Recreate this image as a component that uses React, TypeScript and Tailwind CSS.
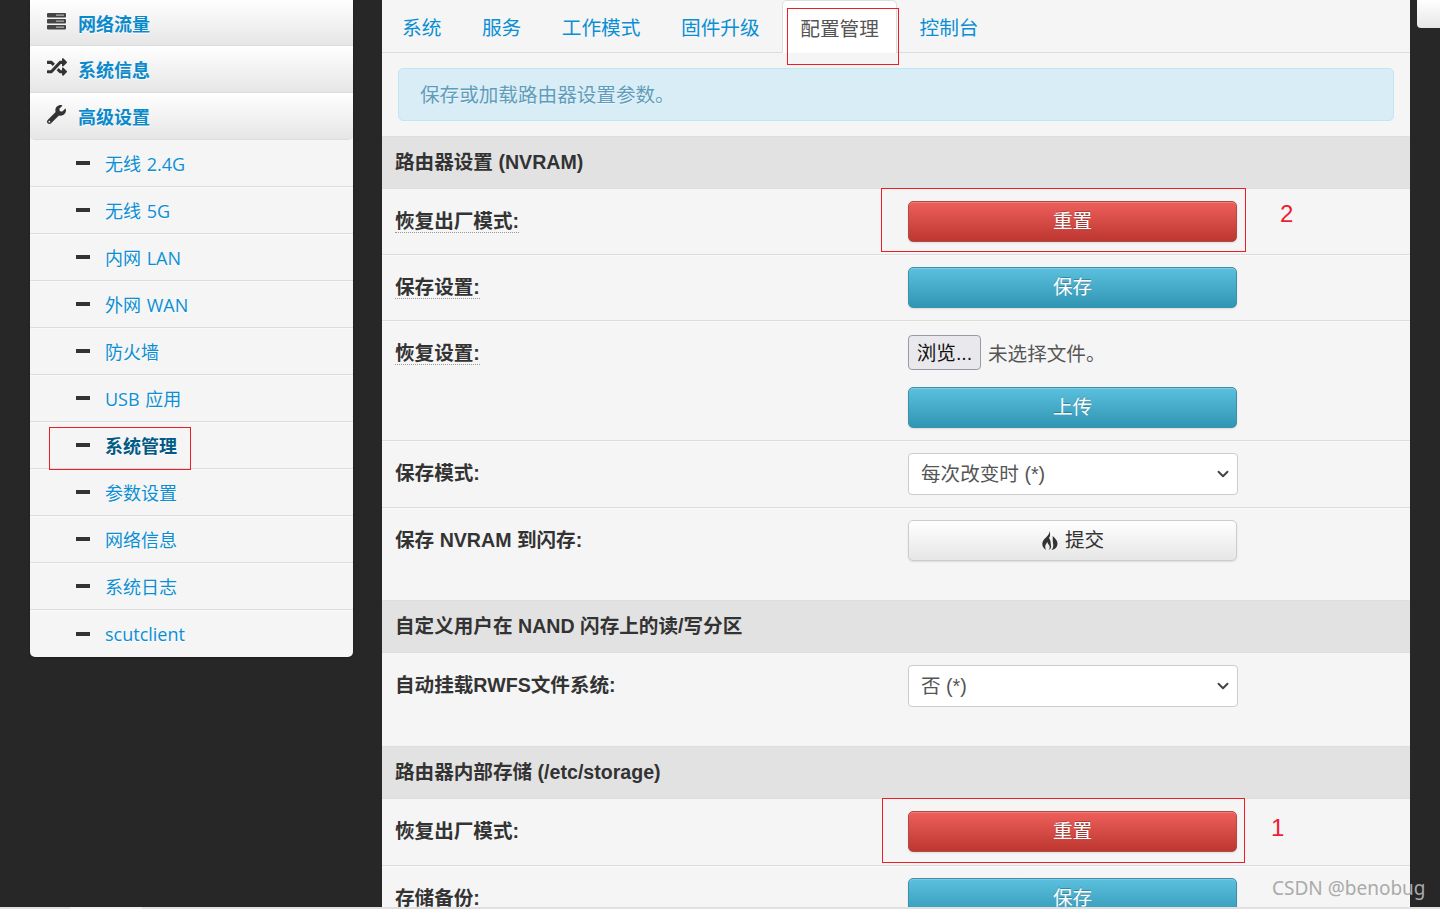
import React from 'react';
import { FaRandom, FaWrench } from 'react-icons/fa';
import { ChevronDown } from 'lucide-react';

const font = "font-['Liberation_Sans','Noto_Sans_CJK_SC',sans-serif]";
const menuFont = "font-['Open_Sans','Noto_Sans_CJK_SC',sans-serif]";

const subItems = ['无线 2.4G', '无线 5G', '内网 LAN', '外网 WAN', '防火墙', 'USB 应用', '系统管理', '参数设置', '网络信息', '系统日志', 'scutclient'];
const tabs = ['系统', '服务', '工作模式', '固件升级', '配置管理', '控制台'];

const StackIcon = () => (
  <svg width="19" height="17" viewBox="0 0 19 17" className="text-[#444]">
    <rect x="0" y="0" width="19" height="4.5" rx="1" fill="currentColor" />
    <rect x="0" y="6" width="19" height="4.5" rx="1" fill="currentColor" />
    <rect x="0" y="12" width="19" height="4.5" rx="1" fill="currentColor" />
    <rect x="9" y="1.6" width="8" height="1" fill="#ccc" />
    <rect x="9" y="7.6" width="8" height="1" fill="#ccc" />
    <rect x="9" y="13.6" width="8" height="1" fill="#ccc" />
  </svg>
);

const FlameIcon = () => (
  <svg width="17" height="19" viewBox="0 0 17 19" className="text-[#333]">
    <path
      fill="currentColor"
      d="M8 0C9 3.5 5.5 5.5 3 8.5C.5 11.5.5 16 5 19C3.5 16 4 13.5 6.5 11C6.5 13 8 13.5 8.5 15C9 16.5 8.5 18 7.5 19C9.5 18.5 10.5 16.5 10 14.5C9.5 12 10 9 8 7C9.5 5 9.5 2.5 8 0Z"
    />
    <path
      fill="currentColor"
      d="M11.5 5C12 7.5 11.5 9.5 12 12C12.5 14.5 12.5 17 10.5 19C14 18.5 16.5 16 16.5 12.5C16.5 9.5 14 7 11.5 5Z"
    />
  </svg>
);

const MenuHead: React.FC<{ icon: React.ReactNode; label: string; height: string; iconClass: string; last?: boolean }> = ({ icon, label, height, iconClass, last }) => (
  <div className={`flex items-center bg-gradient-to-b from-white to-[#e6e6e6] border-b border-[#ddd] ${height} ${last ? 'rounded-b-[5px]' : ''}`}>
    <span className={`flex w-[48px] justify-center pl-[5px] ${iconClass}`}>{icon}</span>
    <span className="pt-[3px] text-[18px] font-bold text-[#0b8acb] [text-shadow:0_1px_0_#fff]">{label}</span>
  </div>
);

const SubItem: React.FC<{ label: string; active: boolean; last: boolean }> = ({ label, active, last }) => (
  <div className={`relative flex h-[47px] items-center pl-[46px] pt-[2px] ${last ? '' : 'border-b border-[#dcdcdc] shadow-[0_1px_0_#fafafa]'}`}>
    <span className="mb-[2px] h-[4px] w-[14px] bg-[#333]" />
    <span className={`ml-[15px] text-[18px] [word-spacing:1px] [text-shadow:0_1px_0_#fff] ${active ? 'font-bold text-[#005a85]' : 'text-[#0b8fd4]'}`}>{label}</span>
    {active && <div className="absolute left-[19px] top-[5px] h-[43px] w-[142px] border border-[#ee1c25]" />}
  </div>
);

const ActionButton: React.FC<{ label: string; color: 'red' | 'blue' }> = ({ label, color }) => (
  <button
    className={`h-[41px] w-[329px] rounded-[5px] border pt-[1px] text-[19.6px] text-white shadow-[inset_0_1px_0_rgba(255,255,255,0.2),0_1px_2px_rgba(0,0,0,0.1)] [text-shadow:0_-1px_0_rgba(0,0,0,0.25)] ${
      color === 'red'
        ? 'border-[#b04a45] bg-gradient-to-b from-[#ee5f5b] to-[#bd362f]'
        : 'border-[#3f8fab] bg-gradient-to-b from-[#5bc0de] to-[#2f96b4]'
    }`}
  >
    {label}
  </button>
);

const SelectBox: React.FC<{ value: string }> = ({ value }) => (
  <div className="flex h-[42px] w-[330px] items-center justify-between rounded-[4px] border border-[#ccc] bg-white pl-[12px] pr-[5px] text-[19.6px] text-[#555]">
    <span className="pt-[1px]">{value}</span>
    <ChevronDown size={18} strokeWidth={2.6} className="text-[#444]" />
  </div>
);

const SectionHead: React.FC<{ title: string }> = ({ title }) => (
  <div className="flex h-[53px] items-center border-y border-[#dedede] bg-[#e2e2e2] pl-[13px] pt-[1px] text-[19.6px] font-bold text-[#333]">{title}</div>
);

const Row: React.FC<{ label: string; height: string; dotted?: boolean; border?: boolean; children: React.ReactNode }> = ({ label, height, dotted, border = true, children }) => (
  <div className={`flex ${height} ${border ? 'border-b border-[#dcdcdc] shadow-[0_1px_0_#fafafa]' : ''}`}>
    <div className="w-[526px] shrink-0 pl-[13px] pt-[19px] text-[19.6px] font-bold leading-[27px] text-[#333]">
      <span className={dotted ? 'border-b border-dotted border-[#999]' : ''}>{label}</span>
    </div>
    <div className="flex flex-col items-start gap-[17px] pt-[12px]">{children}</div>
  </div>
);

export default function App() {
  return (
    <div className={`relative h-[909px] overflow-hidden bg-[#272727] ${font}`}>
      <div className="flex h-[907px] items-start overflow-hidden pl-[30px]">
        {/* Sidebar */}
        <aside className={`w-[323px] shrink-0 overflow-hidden rounded-b-[5px] bg-[#f5f5f5] shadow-[0_1px_2px_rgba(0,0,0,0.3)] ${menuFont}`}>
          <MenuHead icon={<StackIcon />} label="网络流量" height="h-[46px]" iconClass="mb-[2px]" />
          <MenuHead icon={<FaRandom size={20} className="text-[#333]" />} label="系统信息" height="h-[47px]" iconClass="mb-[4px]" />
          <MenuHead icon={<FaWrench size={19} className="text-[#333]" />} label="高级设置" height="h-[47px]" iconClass="mb-[4px]" last />
          {subItems.map((item, i) => (
            <SubItem key={item} label={item} active={item === '系统管理'} last={i === subItems.length - 1} />
          ))}
        </aside>

        {/* Main panel */}
        <main className="relative ml-[29px] h-full w-[1028px] shrink-0 overflow-hidden bg-[#f5f5f5]">
          <div className={`flex h-[53px] gap-[4.5px] border-b border-[#dcdcdc] pl-[2px] ${menuFont}`}>
            {tabs.map(tab => (
              <div
                key={tab}
                className={`h-[53px] pt-[14px] text-[19.7px] leading-[27px] ${
                  tab === '配置管理' ? 'rounded-t-[5px] border-x border-t border-[#ddd] bg-white px-[17px] text-[#555]' : 'px-[18px] text-[#0b8fd4]'
                }`}
              >
                {tab}
              </div>
            ))}
          </div>

          <div className={`ml-[16px] mt-[15px] flex h-[53px] w-[996px] items-center rounded-[5px] border border-[#bce8f1] bg-[#d9edf7] pl-[21px] pt-[1px] text-[19.6px] text-[#5f9dbb] [text-shadow:0_1px_0_rgba(255,255,255,0.5)] ${menuFont}`}>
            保存或加载路由器设置参数。
          </div>

          <div className="mt-[15px]">
            <SectionHead title="路由器设置 (NVRAM)" />
            <Row label="恢复出厂模式:" height="h-[66px]" dotted>
              <ActionButton label="重置" color="red" />
            </Row>
            <Row label="保存设置:" height="h-[66px]" dotted>
              <ActionButton label="保存" color="blue" />
            </Row>
            <Row label="恢复设置:" height="h-[120px]" dotted>
              <div className="mt-[2px] flex items-center">
                <button className="h-[35px] w-[73px] rounded-[4px] border border-[#9a9aa5] bg-[#e9e9ed] pt-[2px] text-[19.6px] leading-[27px] text-[#111]">浏览...</button>
                <span className="ml-[7px] pt-[4px] text-[19.6px] leading-[27px] text-[#555]">未选择文件。</span>
              </div>
              <ActionButton label="上传" color="blue" />
            </Row>
            <Row label="保存模式:" height="h-[67px]">
              <SelectBox value="每次改变时 (*)" />
            </Row>
            <Row label="保存 NVRAM 到闪存:" height="h-[92px]" border={false}>
              <button className="flex h-[41px] w-[329px] items-center justify-center gap-[7px] rounded-[5px] border border-[#ccc] bg-gradient-to-b from-white to-[#e6e6e6] text-[19.6px] text-[#333] shadow-[0_1px_2px_rgba(0,0,0,0.1)]">
                <FlameIcon />
                提交
              </button>
            </Row>
            <SectionHead title="自定义用户在 NAND 闪存上的读/写分区" />
            <Row label="自动挂载RWFS文件系统:" height="h-[93px]" border={false}>
              <SelectBox value="否 (*)" />
            </Row>
            <SectionHead title="路由器内部存储 (/etc/storage)" />
            <Row label="恢复出厂模式:" height="h-[67px]">
              <ActionButton label="重置" color="red" />
            </Row>
            <Row label="存储备份:" height="h-[66px]" border={false}>
              <ActionButton label="保存" color="blue" />
            </Row>
          </div>

          {/* Annotations drawn over the page */}
          <div className="absolute left-[405px] top-[8px] h-[57px] w-[112px] border border-[#ee1c25]" />
          <div className="absolute left-[499px] top-[188px] h-[64px] w-[365px] border border-[#ee1c25]" />
          <div className="absolute left-[500px] top-[798px] h-[65px] w-[363px] border border-[#ee1c25]" />
          <span className="absolute left-[898px] top-[199px] text-[24px] leading-[30px] text-[#ee1c35]">2</span>
          <span className="absolute left-[889px] top-[813px] text-[24px] leading-[30px] text-[#ee1c35]">1</span>
        </main>

        <div className="ml-[7px] h-[28px] flex-1 rounded-bl-[4px] bg-gradient-to-b from-white to-[#e6e6e6]" />
      </div>

      {/* Bottom edge of the window */}
      <div className="flex h-[2px] bg-[#e0e0e0]">
        <div className="ml-[70px] w-[72px] bg-[#f0f0f0]" />
      </div>

      <span className="absolute left-[1272px] top-[875px] font-['Noto_Sans',sans-serif] text-[19px] leading-[27px] text-[#aaa]">CSDN @benobug</span>
    </div>
  );
}
